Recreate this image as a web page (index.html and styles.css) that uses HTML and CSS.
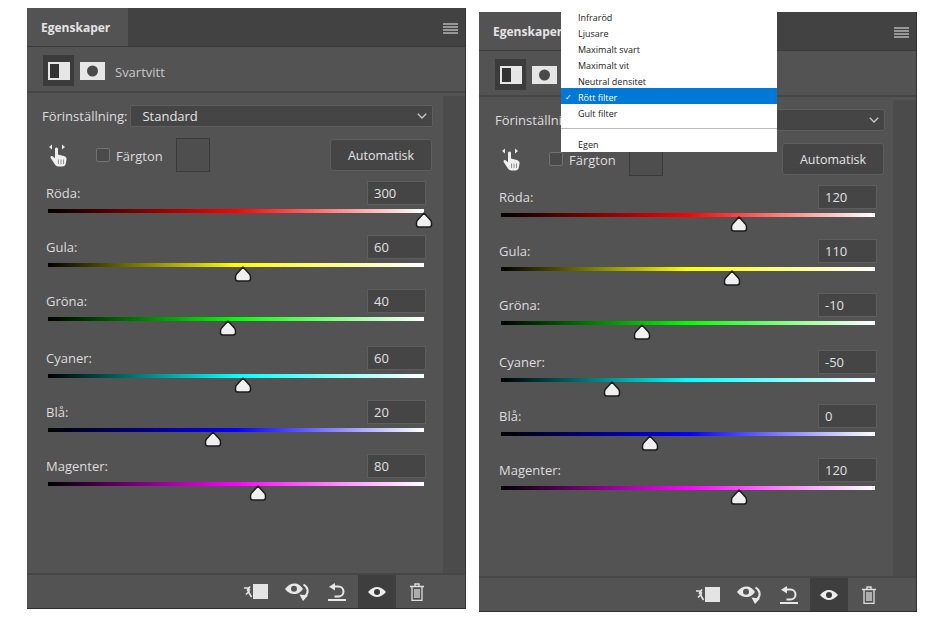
FILE: index.html
```html
<!DOCTYPE html>
<html lang="sv">
<head>
<meta charset="UTF-8">
<meta name="viewport" content="width=device-width, initial-scale=1.0">
<title>Egenskaper</title>
<link rel="stylesheet" href="styles.css">
</head>
<body>
<svg class="defs" width="0" height="0">
  <symbol id="i-thumb" viewBox="0 0 18 16">
    <path d="M9 1 15.200 7.800Q16.500 9.200 16.500 11V12.800Q16.500 15 14.300 15H3.700Q1.500 15 1.500 12.800V11Q1.500 9.200 2.800 7.800Z" fill="#f0f0f0" stroke="#1c1c1c" stroke-width="1.500" stroke-linejoin="round"/>
  </symbol>
  <symbol id="i-menu" viewBox="0 0 15 11">
    <path d="M0 1H15M0 4H15M0 7H15M0 10H15" stroke="#b4b4b4" stroke-width="1.400"/>
  </symbol>
  <symbol id="i-adjust" viewBox="0 0 24 20">
    <rect x="1" y="1" width="22" height="18" fill="#e6e6e6"/>
    <rect x="3" y="3" width="9" height="14" fill="#333"/>
  </symbol>
  <symbol id="i-mask" viewBox="0 0 25 18">
    <rect width="25" height="18" fill="#e6e6e6"/>
    <circle cx="12.500" cy="9" r="5.500" fill="#4a4a4a"/>
  </symbol>
  <symbol id="i-hand" viewBox="0 0 20 24">
    <path d="M1 4 4 1.500V6.500ZM17 4 14 1.500V6.500Z" fill="#e8e8e8"/>
    <path d="M8.500 4.500C9.600 4.500 10 5.300 10 6.300V11.500L15.800 13C17.800 13.600 18.800 14.800 18.500 16.800L17.800 20.500C17.500 22.300 16.200 23.500 14.300 23.500H10.500C8.800 23.500 7.700 22.700 6.800 21.300L2.800 15.200C2.200 14.300 2.600 13.300 3.500 13.100 4.300 12.900 5.100 13.500 7 15.300V6.300C7 5.300 7.400 4.500 8.500 4.500Z" fill="#efefef"/>
    <path d="M10.500 16.500V21M13 16.500V21M15.500 16.500V21" stroke="#777" stroke-width=".8"/>
  </symbol>
  <symbol id="i-clip" viewBox="0 0 25 15">
    <rect x="10" y="0" width="15" height="15" fill="#e4e4e4"/>
    <path d="M1 4H5L7 6.500M7 2.500 4.500 6 8.500 13M3 10.500 6.500 7" fill="none" stroke="#e4e4e4" stroke-width="1.600"/>
  </symbol>
  <symbol id="i-eye-cycle" viewBox="0 0 25 18">
    <path d="M0 6C3 2 6 .5 9.500 .5S15 2 18 6C15 10 12.500 11 9.500 11S3 10 0 6Z" fill="#e8e8e8"/>
    <circle cx="9" cy="5.700" r="3" fill="#555"/>
    <path d="M18.500 1.500C23.500 4.500 24 9.500 20 13.500" fill="none" stroke="#e8e8e8" stroke-width="2"/>
    <path d="M14.500 11.500 23 12.500 18 18Z" fill="#e8e8e8"/>
  </symbol>
  <symbol id="i-reset" viewBox="0 0 18 18">
    <path d="M5.500 3.500H10.500A5 5 0 0 1 10.500 13.500H6.500" fill="none" stroke="#e8e8e8" stroke-width="2"/>
    <path d="M7 0V7.500L1 3.700Z" fill="#e8e8e8"/>
    <rect x="0" y="16" width="18" height="2" fill="#e8e8e8"/>
  </symbol>
  <symbol id="i-eye" viewBox="0 0 18 10">
    <path d="M0 5C3 1.500 6 0 9 0S15 1.500 18 5C15 8.500 12 10 9 10S3 8.500 0 5Z" fill="#ededed"/>
    <circle cx="9" cy="5" r="3" fill="#3a3a3a"/>
  </symbol>
  <symbol id="i-trash" viewBox="0 0 14 18">
    <path d="M0 3.500H14M5 3V1H9V3" fill="none" stroke="#dedede" stroke-width="1.400"/>
    <path d="M2 4V17.300H12V4M5 6V15M7 6V15M9 6V15" fill="none" stroke="#dedede" stroke-width="1.300"/>
  </symbol>
</svg>

<div class="desk">

  <section class="panel">
    <header class="tabbar">
      <div class="tab">Egenskaper</div>
      <svg class="burger"><use href="#i-menu"/></svg>
    </header>
    <div class="toolbar">
      <div class="mode-btn"><svg class="ico-adjust"><use href="#i-adjust"/></svg></div>
      <svg class="ico-mask"><use href="#i-mask"/></svg>
      <span class="mode-name">Svartvitt</span>
    </div>
    <div class="body">
      <div class="main">
        <div class="preset">
          <span class="preset-label">Förinställning:</span>
          <div class="select">
            <span>Standard</span>
            <svg class="chevron" viewBox="0 0 10 6"><path d="M.8.8 5 5 9.200.8" fill="none" stroke="#c8c8c8" stroke-width="1.300"/></svg>
          </div>
        </div>
        <div class="options">
          <svg class="ico-hand"><use href="#i-hand"/></svg>
          <span class="checkbox"></span>
          <span class="check-label">Färgton</span>
          <span class="swatch"></span>
          <button class="auto">Automatisk</button>
        </div>
        <div class="sliders">
          <div class="slider">
            <div class="slider-top"><label>Röda:</label><span class="num">300</span></div>
            <div class="track red"><svg class="thumb" style="left:100%"><use href="#i-thumb"/></svg></div>
          </div>
          <div class="slider">
            <div class="slider-top"><label>Gula:</label><span class="num">60</span></div>
            <div class="track yellow"><svg class="thumb" style="left:51.900%"><use href="#i-thumb"/></svg></div>
          </div>
          <div class="slider">
            <div class="slider-top"><label>Gröna:</label><span class="num">40</span></div>
            <div class="track green"><svg class="thumb" style="left:47.900%"><use href="#i-thumb"/></svg></div>
          </div>
          <div class="slider slider-cyan">
            <div class="slider-top"><label>Cyaner:</label><span class="num">60</span></div>
            <div class="track cyan"><svg class="thumb" style="left:51.900%"><use href="#i-thumb"/></svg></div>
          </div>
          <div class="slider">
            <div class="slider-top"><label>Blå:</label><span class="num">20</span></div>
            <div class="track blue"><svg class="thumb" style="left:43.800%"><use href="#i-thumb"/></svg></div>
          </div>
          <div class="slider">
            <div class="slider-top"><label>Magenter:</label><span class="num">80</span></div>
            <div class="track magenta"><svg class="thumb" style="left:55.900%"><use href="#i-thumb"/></svg></div>
          </div>
        </div>
      </div>
      <div class="scroll"></div>
    </div>
    <footer class="foot">
      <svg class="ico-clip"><use href="#i-clip"/></svg>
      <svg class="ico-cycle"><use href="#i-eye-cycle"/></svg>
      <svg class="ico-reset"><use href="#i-reset"/></svg>
      <div class="eye-btn"><svg class="ico-eye"><use href="#i-eye"/></svg></div>
      <svg class="ico-trash"><use href="#i-trash"/></svg>
    </footer>
  </section>

  <section class="panel panel-b">
    <header class="tabbar">
      <div class="tab">Egenskaper</div>
      <svg class="burger"><use href="#i-menu"/></svg>
    </header>
    <div class="toolbar">
      <div class="mode-btn"><svg class="ico-adjust"><use href="#i-adjust"/></svg></div>
      <svg class="ico-mask"><use href="#i-mask"/></svg>
    </div>
    <div class="body">
      <div class="main">
        <div class="preset">
          <span class="preset-label">Förinställning:</span>
          <div class="select">
            <span></span>
            <svg class="chevron" viewBox="0 0 10 6"><path d="M.8.8 5 5 9.200.8" fill="none" stroke="#c8c8c8" stroke-width="1.300"/></svg>
          </div>
        </div>
        <div class="options">
          <svg class="ico-hand"><use href="#i-hand"/></svg>
          <span class="checkbox"></span>
          <span class="check-label">Färgton</span>
          <span class="swatch"></span>
          <button class="auto">Automatisk</button>
        </div>
        <div class="sliders">
          <div class="slider">
            <div class="slider-top"><label>Röda:</label><span class="num">120</span></div>
            <div class="track red"><svg class="thumb" style="left:63.700%"><use href="#i-thumb"/></svg></div>
          </div>
          <div class="slider">
            <div class="slider-top"><label>Gula:</label><span class="num">110</span></div>
            <div class="track yellow"><svg class="thumb" style="left:61.800%"><use href="#i-thumb"/></svg></div>
          </div>
          <div class="slider">
            <div class="slider-top"><label>Gröna:</label><span class="num">-10</span></div>
            <div class="track green"><svg class="thumb" style="left:37.700%"><use href="#i-thumb"/></svg></div>
          </div>
          <div class="slider slider-cyan">
            <div class="slider-top"><label>Cyaner:</label><span class="num">-50</span></div>
            <div class="track cyan"><svg class="thumb" style="left:29.700%"><use href="#i-thumb"/></svg></div>
          </div>
          <div class="slider">
            <div class="slider-top"><label>Blå:</label><span class="num">0</span></div>
            <div class="track blue"><svg class="thumb" style="left:39.800%"><use href="#i-thumb"/></svg></div>
          </div>
          <div class="slider">
            <div class="slider-top"><label>Magenter:</label><span class="num">120</span></div>
            <div class="track magenta"><svg class="thumb" style="left:63.700%"><use href="#i-thumb"/></svg></div>
          </div>
        </div>
      </div>
      <div class="scroll"></div>
    </div>
    <footer class="foot">
      <svg class="ico-clip"><use href="#i-clip"/></svg>
      <svg class="ico-cycle"><use href="#i-eye-cycle"/></svg>
      <svg class="ico-reset"><use href="#i-reset"/></svg>
      <div class="eye-btn"><svg class="ico-eye"><use href="#i-eye"/></svg></div>
      <svg class="ico-trash"><use href="#i-trash"/></svg>
    </footer>

    <ul class="menu">
      <li>Infraröd</li>
      <li>Ljusare</li>
      <li>Maximalt svart</li>
      <li>Maximalt vit</li>
      <li>Neutral densitet</li>
      <li class="current">Rött filter</li>
      <li>Gult filter</li>
      <li class="sep"></li>
      <li>Egen</li>
    </ul>
  </section>

</div>
</body>
</html>
```

FILE: styles.css
```css
body {
  margin: 0;
  background-color: #fff;
  font-family: "Open Sans", "Noto Sans", sans-serif;
  font-size: 13px;
  color: #dcdcdc;
}
.defs {
  position: absolute;
}
.desk {
  display: flex;
  align-items: flex-start;
  gap: 13px;
  padding: 8px 0 0 27px;
}

/* panel */
.panel {
  position: relative;
  display: flex;
  flex-direction: column;
  width: 439px;
  height: 601px;
  box-sizing: border-box;
  background-color: #535353;
  border-right: 1px solid #333;
  border-bottom: 1px solid #2e2e2e;
}
.panel-b {
  width: 438px;
  height: 600px;
  margin-top: 4px;
}
.tabbar {
  display: flex;
  justify-content: space-between;
  height: 38px;
  flex: none;
  background-color: #424242;
  border-bottom: 1px solid #3a3a3a;
}
.tab {
  width: 101px;
  padding: 11px 0 0 14px;
  box-sizing: border-box;
  background-color: #535353;
  font-weight: 700;
  font-size: 12px;
  color: #e4e4e4;
}
.burger {
  width: 15px;
  height: 11px;
  margin: 15px 7px 0 0;
}

.toolbar {
  display: flex;
  align-items: center;
  flex: none;
  height: 46px;
  padding: 3px 0 0 16px;
  border-bottom: 2px solid #454545;
  box-sizing: border-box;
}
.mode-btn {
  display: flex;
  align-items: center;
  justify-content: center;
  width: 31px;
  height: 31px;
  background-color: #3b3b3b;
}
.ico-adjust {
  width: 24px;
  height: 20px;
}
.ico-mask {
  width: 25px;
  height: 18px;
  margin-left: 6px;
}
.mode-name {
  margin: 3px 0 0 10px;
  color: #c8c8c8;
}

.body {
  display: flex;
  flex: 1;
  min-height: 0;
  padding-top: 3px;
}
.main {
  flex: 1;
  padding: 9px 10px 0 15px;
}
.panel-b .main {
  padding: 9px 8px 0 16px;
}
.scroll {
  width: 22px;
  flex: none;
  background-color: #4b4b4b;
}
.panel-b .scroll {
  width: 23px;
}

.preset {
  display: flex;
  align-items: center;
  gap: 3px;
}
.preset-label {
  white-space: nowrap;
}
.select {
  flex: 1;
  display: flex;
  justify-content: space-between;
  align-items: center;
  height: 22px;
  box-sizing: border-box;
  padding: 0 5px 0 11px;
  background-color: #454545;
  border: 1px solid #5e5e5e;
  border-radius: 2px;
  color: #e4e4e4;
}
.chevron {
  width: 10px;
  height: 6px;
}

.options {
  display: flex;
  align-items: center;
  height: 34px;
  margin-top: 11px;
  padding-left: 6px;
}
.ico-hand {
  width: 20px;
  height: 24px;
}
.checkbox {
  width: 12px;
  height: 12px;
  margin-left: 28px;
  border: 1px solid #737373;
  border-radius: 2px;
  background-color: #4a4a4a;
}
.check-label {
  margin: 2px 0 0 6px;
}
.swatch {
  width: 32px;
  height: 32px;
  margin-left: 13px;
  border: 1px solid #3a3a3a;
  background-color: #4e4e4e;
}
.auto {
  width: 102px;
  height: 32px;
  margin: 0 1px 0 auto;
  padding: 0;
  background-color: #454545;
  border: 1px solid #5e5e5e;
  border-radius: 3px;
  font: inherit;
  font-size: 12.5px;
  color: #e4e4e4;
}

.sliders {
  margin-top: 9px;
  padding: 0 7px 0 4px;
}
.panel-b .sliders {
  padding-right: 8px;
}
.slider {
  height: 54px;
}
.slider-cyan {
  margin-top: 3px;
}
.slider-top {
  display: flex;
  justify-content: space-between;
  height: 24px;
}
.slider-top label {
  line-height: 25px;
}
.num {
  width: 59px;
  height: 24px;
  box-sizing: border-box;
  padding-left: 6px;
  line-height: 23px;
  background-color: #454545;
  border: 1px solid #5e5e5e;
  color: #e0e0e0;
}
.track {
  position: relative;
  height: 4px;
  margin: 4px 2px 0;
}
.thumb {
  position: absolute;
  top: 3px;
  width: 18px;
  height: 16px;
  margin-left: -9px;
}
.red { background: linear-gradient(to right, #000, #f00 50%, #fff); }
.yellow { background: linear-gradient(to right, #000, #ff0 50%, #fff); }
.green { background: linear-gradient(to right, #000, #0f0 50%, #fff); }
.cyan { background: linear-gradient(to right, #000, #0ff 50%, #fff); }
.blue { background: linear-gradient(to right, #000, #00f 50%, #fff); }
.magenta { background: linear-gradient(to right, #000, #f0f 50%, #fff); }

.foot {
  display: flex;
  align-items: center;
  flex: none;
  height: 35px;
  box-sizing: border-box;
  padding-left: 216px;
  border-top: 2px solid #464646;
}
.ico-clip {
  width: 25px;
  height: 15px;
}
.ico-cycle {
  width: 25px;
  height: 18px;
  margin-left: 17px;
}
.ico-reset {
  width: 18px;
  height: 18px;
  margin-left: 18px;
}
.eye-btn {
  display: flex;
  align-items: center;
  justify-content: center;
  width: 38px;
  height: 33px;
  margin-left: 12px;
  background-color: #3e3e3e;
}
.ico-eye {
  width: 18px;
  height: 10px;
}
.ico-trash {
  width: 14px;
  height: 18px;
  margin-left: 14px;
}

/* popup over the preset select */
.menu {
  position: absolute;
  top: 0;
  left: 82px;
  width: 216px;
  height: 140px;
  margin: 0;
  padding: 0;
  list-style: none;
  background-color: #fff;
  font-size: 9px;
  color: #222;
}
.menu li {
  position: relative;
  height: 16px;
  padding-left: 17px;
  line-height: 19px;
}
.menu li:first-child {
  height: 12px;
  line-height: 11px;
}
.menu .current {
  background-color: #0078d7;
  color: #fff;
}
.menu .current::before {
  content: "✓";
  position: absolute;
  left: 4px;
  font-family: "DejaVu Sans", sans-serif;
  font-size: 8px;
}
.menu .sep {
  height: 15px;
}
.menu .sep::after {
  content: "";
  position: absolute;
  top: 8px;
  left: 0;
  right: 0;
  border-top: 1px solid #bdbdbd;
}
```
